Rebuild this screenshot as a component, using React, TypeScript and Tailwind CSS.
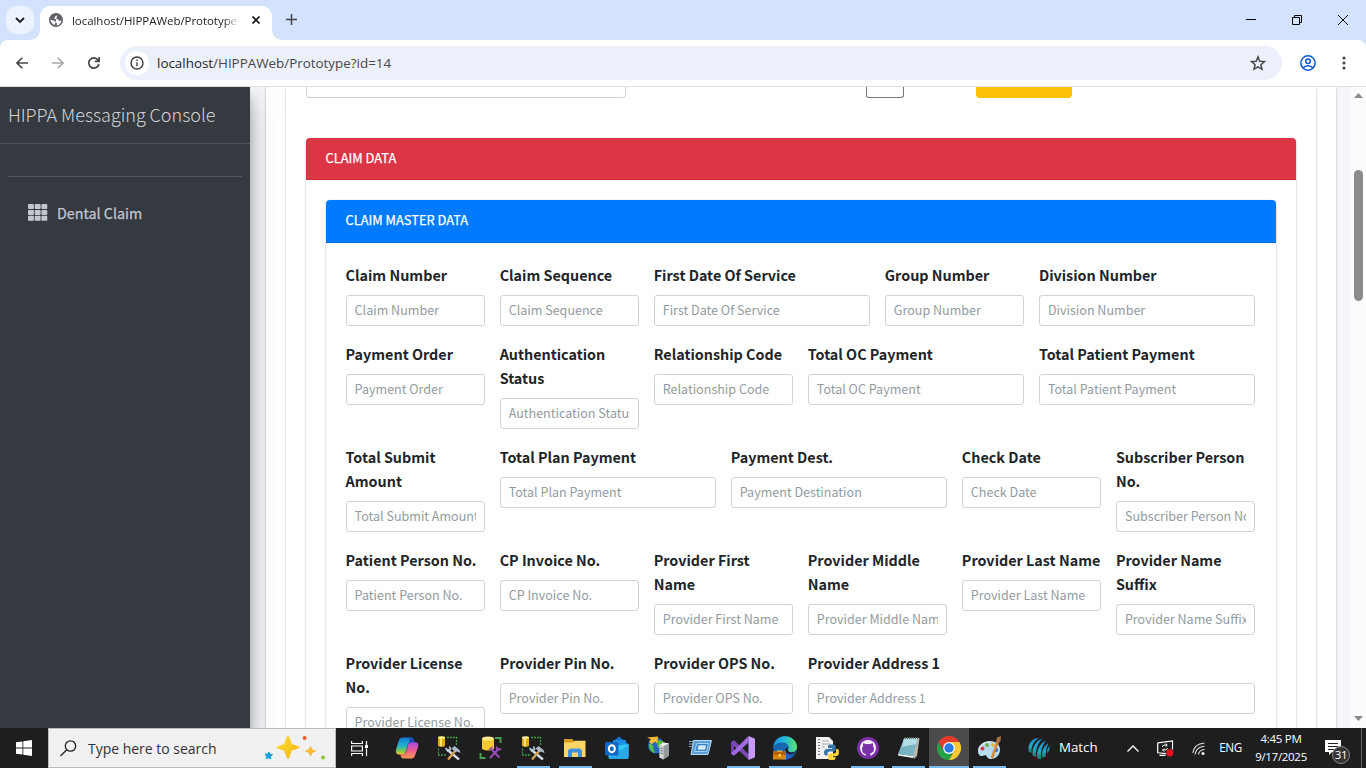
import type { ReactNode } from "react";

type Field = { label: string; placeholder?: string; span: string };

const S2 = "col-span-2";
const S3 = "col-span-3";

const rows: Field[][] = [
  [
    { label: "Claim Number", span: S2 },
    { label: "Claim Sequence", span: S2 },
    { label: "First Date Of Service", span: S3 },
    { label: "Group Number", span: S2 },
    { label: "Division Number", span: S3 },
  ],
  [
    { label: "Payment Order", span: S2 },
    { label: "Authentication Status", span: S2 },
    { label: "Relationship Code", span: S2 },
    { label: "Total OC Payment", span: S3 },
    { label: "Total Patient Payment", span: S3 },
  ],
  [
    { label: "Total Submit Amount", span: S2 },
    { label: "Total Plan Payment", span: S3 },
    { label: "Payment Dest.", placeholder: "Payment Destination", span: S3 },
    { label: "Check Date", span: S2 },
    { label: "Subscriber Person No.", span: S2 },
  ],
  [
    { label: "Patient Person No.", span: S2 },
    { label: "CP Invoice No.", span: S2 },
    { label: "Provider First Name", span: S2 },
    { label: "Provider Middle Name", span: S2 },
    { label: "Provider Last Name", span: S2 },
    { label: "Provider Name Suffix", span: S2 },
  ],
  [
    { label: "Provider License No.", span: S2 },
    { label: "Provider Pin No.", span: S2 },
    { label: "Provider OPS No.", span: S2 },
    { label: "Provider Address 1", span: "col-span-6" },
  ],
];

const cardShadow = "shadow-[0_0_1px_rgba(0,0,0,0.125),0_1px_3px_rgba(0,0,0,0.2)]";

function FormField({ label, placeholder, span }: Field) {
  return (
    <div className={`${span} min-w-0 pb-4`}>
      <label className="mb-2 block text-[14.35px] leading-6 font-bold text-[#212529]">{label}</label>
      <input
        type="text"
        placeholder={placeholder ?? label}
        className="block h-[31px] w-full rounded-[3px] border border-[#ced4da] bg-white px-2 pb-[2px] text-[12.55px] text-[#495057] placeholder:text-[#939ba2] outline-none"
      />
    </div>
  );
}

function TitleBar() {
  return (
    <div className="flex h-10 shrink-0 items-start bg-[#d3e2fd]">
      <div className="mt-[6px] ml-[6px] flex size-7 items-center justify-center rounded-[10px] bg-[#ecf2fe]">
        <svg width="10" height="8" viewBox="0 0 10 8" fill="none" stroke="#1f1f1f" strokeWidth="1.900"><path d="M1 2l4 4 4-4" /></svg>
      </div>
      <div className="relative mt-[6px] ml-[6px] flex h-[34px] w-[232px] items-center rounded-t-[10px] bg-white pb-[6px]">
        <svg className="absolute bottom-0 -left-[10px]" width="10" height="10"><path d="M10 0v10H0A10 10 0 0 0 10 0z" fill="#fff" /></svg>
        <svg className="absolute -right-[10px] bottom-0" width="10" height="10"><path d="M0 0v10h10A10 10 0 0 1 0 0z" fill="#fff" /></svg>
        <svg className="ml-[9px] shrink-0" width="14" height="14" viewBox="0 0 14 14">
          <circle cx="7" cy="7" r="7" fill="#5f6368" />
          <path d="M8.400 1.700c-.2 1.300-1.700.9-2.200 1.700-.3.700.2 1-.6 1.400-.7.400-.6 1.200.2 1.300h2.400c1.300.1 1 1.300 1.800 1.600.7.200 1.600-.4 2.500-.3-.3 2.700-2.300 4.700-4.700 5 .1-1.100.6-1.900-.2-2.400-.9-.5-1.900-.4-1.900-1.700C5.700 7.400 3.200 7.900 1.600 6.300c-.1 2.600 1.700 5 4.100 5.700" fill="#fff" />
        </svg>
        <div className="ml-[9px] w-[167px] overflow-hidden pt-px font-['Open_Sans',sans-serif] text-[11.500px] tracking-[-0.050px] whitespace-nowrap text-[#1f1f1f] [mask-image:linear-gradient(to_right,#000_152px,transparent)]">
          localhost/HIPPAWeb/Prototype?
        </div>
        <svg className="ml-[13px] shrink-0" width="8" height="8" viewBox="0 0 9 9" stroke="#1f1f1f" strokeWidth="1.800"><path d="M.5.5l8 8M8.500.5l-8 8" /></svg>
      </div>
      <svg className="mt-[14px] ml-[14px]" width="11" height="11" viewBox="0 0 11 11" stroke="#444" strokeWidth="1.500"><path d="M5.500 0v11M0 5.500h11" /></svg>
      <div className="ml-auto flex items-start">
        <svg className="mt-[19px]" width="10" height="1"><path d="M0 .5h10" stroke="#000" /></svg>
        <svg className="mt-[15px] ml-9" width="10" height="10" viewBox="0 0 10 10" fill="none" stroke="#000"><path d="M.5 2.500h7v7h-7zM2.500 2.500v-2h7v7h-2" /></svg>
        <svg className="mt-[15px] mr-[18px] ml-9" width="10" height="10" viewBox="0 0 10 10" stroke="#000"><path d="M0 0l10 10M10 0L0 10" /></svg>
      </div>
    </div>
  );
}

function Toolbar() {
  return (
    <div className="bg-[#d3e2fd]">
      <div className="flex h-[47px] items-center rounded-t-[8px] border-b border-[#dfe1df] bg-white">
        <svg className="ml-4" width="12" height="12" viewBox="0 0 12 12" fill="none" stroke="#474747" strokeWidth="1.600"><path d="M12 6H1M6.300.7L1 6l5.300 5.300" /></svg>
        <svg className="ml-6" width="12" height="12" viewBox="0 0 12 12" fill="none" stroke="#a9a9a9" strokeWidth="1.600"><path d="M0 6h11M5.700.7L11 6l-5.300 5.300" /></svg>
        <svg className="ml-6" width="12" height="12" viewBox="0 0 12 12" fill="none" stroke="#474747" strokeWidth="1.700"><path d="M10.900 7A5.100 5.100 0 1 1 10 3l1 1.200M11.100 0v4.300H6.800" /></svg>
        <div className="ml-5 flex h-[34px] w-[1162px] items-center rounded-full bg-[#ecf0fa]">
          <div className="ml-[5px] flex size-6 items-center justify-center rounded-full bg-white">
            <svg width="14" height="14" viewBox="0 0 14 14" fill="none" stroke="#3c3c3c" strokeWidth="1.400"><circle cx="7" cy="7" r="6" /><path d="M7 6.200v4M7 3.600v1.500" /></svg>
          </div>
          <span className="ml-2 pt-px font-['Open_Sans',sans-serif] text-[13.400px] text-[#474747]">
            <span className="text-[#1f1f1f]">localhost</span>/HIPPAWeb/Prototype?id=14
          </span>
          <svg className="mr-[16px] ml-auto" width="16" height="16" viewBox="0 0 24 24" fill="none" stroke="#474747" strokeWidth="2.200"><path d="M12 2.800l2.700 6.500 7 .6-5.300 4.600 1.600 6.900-6-3.700-6 3.700 1.600-6.900L2.300 9.900l7-.6z" /></svg>
        </div>
        <svg className="ml-[18px]" width="16" height="16" viewBox="0 0 16 16" fill="none" stroke="#0b57d0" strokeWidth="1.500"><circle cx="8" cy="8" r="7.200" /><circle cx="8" cy="6.300" r="2.300" /><path d="M3 13c2.500-3 7.500-3 10 0" /></svg>
        <svg className="ml-[26px]" width="4" height="14" fill="#474747"><circle cx="2" cy="2" r="1.600" /><circle cx="2" cy="7" r="1.600" /><circle cx="2" cy="12" r="1.600" /></svg>
      </div>
    </div>
  );
}

function Sidebar() {
  return (
    <aside className="relative z-10 w-[250px] shrink-0 bg-[#343a40] shadow-[0_14px_28px_rgba(0,0,0,0.25),0_10px_10px_rgba(0,0,0,0.22)]">
      <div className="h-[57px] border-b border-[#4b545c] pt-[12px] pl-2 text-[18px] leading-[30px] font-light tracking-[-0.030px] text-[#d2d4d6]">
        HIPPA Messaging Console
      </div>
      <div className="mx-2 h-[33px] border-b border-[#4f5962]" />
      <div className="mx-2 mt-4 flex h-10 items-center pl-5 text-[#c2c7d0]">
        <svg className="-mt-px" width="20" height="17" viewBox="0 0 20 17" fill="#c2c7d0">
          {[0, 6.7, 13.4].map((x) =>
            [0, 5.9, 11.8].map((y) => <rect key={`${x}-${y}`} x={x} y={y} width="5.900" height="5" rx="0.900" />),
          )}
        </svg>
        <span className="ml-[9px] text-[14.300px] font-normal [-webkit-text-stroke:0.250px_#c2c7d0]">Dental Claim</span>
      </div>
    </aside>
  );
}

function Content() {
  return (
    <main className="h-[641px] min-w-0 flex-1 overflow-hidden bg-[#f4f6f9] px-4 pr-[15px]">
      <div className={`bg-white px-5 ${cardShadow}`}>
        <div className={`bg-white px-5 ${cardShadow}`}>
          <div className="flex h-[51px] items-start">
            <div className="h-[11px] w-80 rounded-b-[4px] border border-t-0 border-[#ced4da]" />
            <div className="ml-[239.500px] h-[11px] w-[38px] rounded-b-[3px] border border-t-0 border-[#767676]" />
            <div className="ml-[72.500px] h-[11px] w-24 rounded-b-[4px] bg-[#ffc107]" />
          </div>
          <section className={`rounded-[4px] bg-white ${cardShadow}`}>
            <h2 className="flex h-[42px] items-center rounded-t-[4px] border-b border-[#c72f3e] bg-[#dc3545] pb-[2px] pl-[19.500px] text-[12.850px] text-white [-webkit-text-stroke:0.250px_#fff]">CLAIM DATA</h2>
            <div className="p-5">
              <div className={`rounded-[4px] bg-white ${cardShadow}`}>
                <h3 className="flex h-[43px] items-center rounded-t-[4px] border-b border-[#006fe6] bg-[#007bff] pb-[3px] pl-[19.500px] text-[12.850px] text-white [-webkit-text-stroke:0.250px_#fff]">CLAIM MASTER DATA</h3>
                <form className="py-5 pr-[21px] pl-[19.600px]">
                  {rows.map((row, i) => (
                    <div key={i} className="grid grid-cols-12 gap-x-[15px]">
                      {row.map((f) => <FormField key={f.label} {...f} />)}
                    </div>
                  ))}
                </form>
              </div>
            </div>
          </section>
        </div>
      </div>
    </main>
  );
}

function ScrollBar() {
  return (
    <div className="flex w-[15px] shrink-0 flex-col items-center bg-[#fcfcfc]">
      <svg className="mt-[6px]" width="9" height="5"><path d="M0 5L4.500 0 9 5z" fill="#8b8b8b" /></svg>
      <div className="mt-[72px] h-[131px] w-[9px] rounded-full bg-[#8b8b8b]" />
      <svg className="mt-auto mb-[7px]" width="9" height="5"><path d="M0 0l4.500 5L9 0z" fill="#8b8b8b" /></svg>
    </div>
  );
}

function Tools() {
  return (
    <g>
      <path d="M10 13.500l12 10" stroke="#d2dbe6" strokeWidth="2.400" />
      <path d="M8.500 12l2.500 3 2.500-1.500-1-3" fill="none" stroke="#bccada" strokeWidth="1.600" />
      <path d="M19 14l-8 9.500" stroke="#d9a352" strokeWidth="2.300" />
      <path d="M14.500 12.500l3-2.500 5 4 1 3-3.500-1.500-1.500.5z" fill="#aebccb" />
    </g>
  );
}

function DbTools() {
  return (
    <>
      <path d="M10 1.500h9.500V10M1.500 12.500v6.500h8" fill="none" stroke="#3f9a45" strokeWidth="1.300" strokeDasharray="2 1" />
      <path d="M1 1.500h7v8.500q-3.500 1.800-7 0z" fill="#e5a71c" />
      <path d="M3 2h2v8H3z" fill="#ffe27a" />
      <ellipse cx="4.500" cy="1.500" rx="3.500" ry="1.200" fill="#fff0a8" />
      <Tools />
    </>
  );
}

const apps: { name: string; width: string; running?: boolean; active?: boolean; art: ReactNode }[] = [
  {
    name: "copilot", width: "w-[42px]",
    art: (
      <>
        <defs>
          <linearGradient id="cpA" x1="0" y1="0" x2="0" y2="1"><stop offset="0" stopColor="#1478d8" /><stop offset=".5" stopColor="#1fb5c9" /><stop offset=".8" stopColor="#7fc94b" /><stop offset="1" stopColor="#f7c531" /></linearGradient>
          <linearGradient id="cpB" x1="0" y1="0" x2="0" y2="1"><stop offset="0" stopColor="#a44ce8" /><stop offset=".5" stopColor="#ee5a94" /><stop offset="1" stopColor="#fb9a4b" /></linearGradient>
        </defs>
        <path d="M8 1.500h8c1.600 0 2.300 1 2.800 2.500l.8 2.500h-4.100c-1.500 0-2.300.8-2.700 2.200L10.500 16c-.5 1.700-1.400 2.500-3 2.500H4.200C1 18.500.4 16 1.200 13L3.800 4.800C4.500 2.500 5.800 1.500 8 1.500z" fill="url(#cpA)" />
        <path d="M16.500 22.500H9c-2 0-2.700-.8-3.300-2.500l-.6-1.700h3c1.600 0 2.400-.9 2.900-2.500l2.300-7.500c.5-1.400 1.300-2.100 2.700-2.100h4.200c3 0 3.500 2.500 2.700 5.300L20.200 19c-.8 2.600-1.900 3.500-3.700 3.500z" fill="url(#cpB)" />
        <path d="M15 1.500h1.500c1.200 0 1.900 1 2.300 2.500l.8 2.500h-4.100c-.8 0-1.300.2-1.700.6z" fill="#2447b8" />
      </>
    ),
  },
  { name: "profiler", width: "w-[42px]", art: <DbTools /> },
  {
    name: "db-config", width: "w-[42px]",
    art: (
      <>
        <path d="M16 2h5.500v5M1.500 17v5h5" fill="none" stroke="#4aa04e" strokeWidth="2" />
        <path d="M3 2.500h12V13q-6 3-12 0z" fill="#f6c934" />
        <ellipse cx="9" cy="2.500" rx="6" ry="2" fill="#ffeb8a" />
        <path d="M12 13l8.500 8.500M19.500 13L11 22" stroke="#9a50b8" strokeWidth="1.900" />
        <path d="M10 14l3.500-3M17.500 10.500c0 2.500 2 3.500 4.500 2.500" stroke="#9a50b8" strokeWidth="1.900" fill="none" />
      </>
    ),
  },
  { name: "sql-tools", width: "w-[42px]", running: true, art: <DbTools /> },
  {
    name: "explorer", width: "w-[42px]", running: true,
    art: (
      <>
        <path d="M1 3h8.500l1.500 2.500H22V9H1z" fill="#d99a1c" />
        <path d="M1 6.500h9l1.500-1.700H22.500V21H1z" fill="#ffd567" />
        <path d="M5 21v-6.500L7 12.500h10l2 2V21h-4v-4.500H9V21z" fill="#3e93d8" />
      </>
    ),
  },
  {
    name: "outlook", width: "w-[42px]",
    art: (
      <>
        <path d="M5 8L14 .5 23.500 8v5H5z" fill="#1672c8" />
        <path d="M8 4h13v10H8z" fill="#1d8fe2" />
        <path d="M3.500 11l20-3v13q0 2-2 2h-16q-2 0-2-2z" fill="#35c8f5" />
        <path d="M3.500 22L23.500 9v12q0 2-2 2H5z" fill="#2aa8ea" />
        <rect x="0" y="6" width="13.500" height="13.500" rx="1.500" fill="#1068c4" />
        <ellipse cx="6.800" cy="12.700" rx="3" ry="3.500" fill="none" stroke="#fff" strokeWidth="2" />
      </>
    ),
  },
  {
    name: "iis", width: "w-[42px]",
    art: (
      <>
        <circle cx="9" cy="9.500" r="8" fill="#2467c4" />
        <path d="M2 8c3 0 5 2 4.500 4s2 3 1 5.200C4 16 1.500 12 2 8zM10 4l6 1 1.500 5-3 3-4-2z" fill="#58c03f" />
        <path d="M0 1.500l11-1-1 7-2-2-3.500 3L2 5.500 4 3.500z" fill="#f8bd30" />
        <path d="M12.500 9l4-2.500 5.500 1v12.500l-5.500 3.500-4-2z" fill="#969c9e" />
        <path d="M12.500 9l4 1v13.500l-4-2z" fill="#d5d9da" />
        <path d="M12.500 9l4-2.500 5.500 1-5.500 2.500z" fill="#eef0f0" />
        <path d="M13 12l3 .5M13 14.500l3 .5M13 17l3 .5" stroke="#777f85" />
      </>
    ),
  },
  {
    name: "run", width: "w-[42px]",
    art: (
      <>
        <path d="M4.500 4.500h18l-3.500 14H2z" fill="#5b9fd6" stroke="#b8dcf5" />
        <path d="M8 7.500h11.500l-2 8H5.500z" fill="#3a83c4" stroke="#a5d2f3" />
        <path d="M10 9.800h6.500l-.8 3.400H9z" fill="#cce4f6" stroke="#fff" strokeWidth=".7" />
        <path d="M-1 5.500h5M0 8h3.500M-.5 10.500h3" stroke="#8ebde2" strokeWidth=".9" />
      </>
    ),
  },
  {
    name: "visual-studio", width: "w-[42px]", running: true,
    art: (
      <>
        <path d="M0 6l3-1.800v15.600L0 18z" fill="#7042a8" />
        <path d="M3 4.200L18 18.500V24L0 7z" fill="#7a4bb8" />
        <path d="M0 17.500L17.500 0v6.500L3 19.800z" fill="#a06be0" />
        <path d="M17.500 0L24 2.800v18.400L17.500 24z" fill="#c69aff" />
      </>
    ),
  },
  {
    name: "edge", width: "w-[42px]", running: true,
    art: (
      <>
        <defs><linearGradient id="edg"><stop offset="0" stopColor="#1a91d8" /><stop offset=".5" stopColor="#25b9d8" /><stop offset="1" stopColor="#5ee36b" /></linearGradient></defs>
        <circle cx="12" cy="12" r="11.800" fill="#1565b0" />
        <path d="M.2 12C1 3 7-.2 12 .2 20 .5 24 6 24 11c0 4-3.500 5.500-7 5-3-.4-2.500-2-1.500-3.500 1-3-2-6-6-6C5 6.500 1.500 8.500.2 12z" fill="url(#edg)" />
        <path d="M12.500 14c0-1.500 1-2.500 2.800-2.500-.9 1.800-.8 4.500 2.700 5 2 .3 4-.2 5.300-1.200-1 2-3 3-5.500 3-3 0-5.300-1.800-5.300-4.300z" fill="#1c1c1c" />
        <path d="M0 15.500h13v8H0z" fill="#d78310" /><path d="M0 15.500h13v3.500H0z" fill="#b75e08" />
        <path d="M5.500 18h2.500v2.500H5.500zM4 15.500v-1h5v1" fill="#ffd455" />
      </>
    ),
  },
  {
    name: "python", width: "w-[41px]",
    art: (
      <>
        <path d="M1 1h13l4 4v18H1z" fill="#f2f2f2" />
        <path d="M4 3v18" stroke="#777" strokeDasharray="1 2" strokeWidth="2" />
        <path d="M7 5h7M7 8h8M7 11h3" stroke="#a7a7a7" />
        <path d="M14.500 8.500h4q2 0 2 2v3q0 2-2 2h-4q-2 0-2 2v2h-1.500q-2 0-2-3t2.500-3.500h5.500v-.7h-4v-2q0-1.800 2-1.800z" fill="#3776ab" />
        <path d="M18.500 24h-3.500q-2 0-2-2v-2.500q0-2 2-2h4q2 0 2-2V13h1q2 0 2 3.200T22 20h-5v.7h3.500V22q0 2-2 2z" fill="#ffd43b" />
      </>
    ),
  },
  {
    name: "github", width: "w-[41px]", running: true,
    art: (
      <>
        <circle cx="12" cy="12" r="11" fill="#7b2fa8" />
        <circle cx="12" cy="12" r="8" fill="#f7effa" />
        <path d="M9.700 21v-3.600c-2.500-.5-3.700-2-3.700-4.600 0-1.200.4-2.100 1.100-2.900-.3-.9-.2-1.900.1-2.700 1 0 1.900.5 2.600 1.100 1.400-.3 3-.3 4.400 0 .7-.6 1.600-1.100 2.600-1.100.3.800.4 1.800.1 2.700.7.800 1.100 1.700 1.100 2.900 0 2.600-1.200 4.100-3.700 4.600V21z" fill="#7b2fa8" />
        <path d="M6.500 15.500q1 2.200 3.200 2" stroke="#7b2fa8" fill="none" />
      </>
    ),
  },
  {
    name: "notepad", width: "w-[41px]", running: true,
    art: (
      <>
        <path d="M7.500 3L22.500 2l-2.500 18-3 3z" fill="#b9b6ab" />
        <path d="M7 2.500l13.500-.5L16 20 1 18z" fill="#76b4c4" />
        <path d="M7 2.500l13.500-.5L19 8 5 11z" fill="#b4dce4" />
        <path d="M1 18l15 2v2L1 19.500z" fill="#f1f5f5" />
        <path d="M8 2.200h13" stroke="#6e7779" strokeDasharray="1 1" strokeWidth="2" />
      </>
    ),
  },
  {
    name: "chrome", width: "w-[40px]", running: true, active: true,
    art: (
      <>
        <path d="M1.600 6A12 12 0 0 0 12 24l5.200-9H6.800z" fill="#26a148" />
        <path d="M1.600 6A12 12 0 0 1 22.400 6H12L6.800 15z" fill="#e33b2e" />
        <path d="M12 6h10.400A12 12 0 0 1 12 24l5.200-9z" fill="#fcc934" />
        <circle cx="12" cy="12" r="5.900" fill="#fff" /><circle cx="12" cy="12" r="4.700" fill="#287ae6" />
      </>
    ),
  },
  {
    name: "paint", width: "w-[41px]", running: true,
    art: (
      <>
        <path d="M12 5C5 5 0 9.500 0 15c0 3 1.500 5 3.500 5 2 0 2.500-1.500 4.500-.5 1.500 1 1 3.500 5 3.500 5 0 9-4 9-9.500C22 8.500 18 5 12 5z" fill="#b8dcee" />
        <path d="M12 6C6 6 1 10 1 14" stroke="#e5f6fd" fill="none" />
        <circle cx="4.500" cy="12.500" r="2" fill="#d63b35" /><circle cx="9" cy="9" r="2" fill="#69b346" /><circle cx="15" cy="9" r="1.700" fill="#f0ad3d" /><circle cx="18" cy="14" r="2" fill="#2f62bf" />
        <path d="M19.500 6L14 22" stroke="#d9873a" strokeWidth="2.600" />
        <path d="M18 6l1-4.500L23 0l-.5 5L20 8z" fill="#ab7340" />
      </>
    ),
  },
];

function Taskbar() {
  return (
    <footer className="flex h-10 shrink-0 bg-[#1e1e1e] font-['Open_Sans',sans-serif] text-white">
      <div className="flex w-12 items-center justify-center">
        <svg width="16" height="16" viewBox="0 0 16 16" fill="#fff"><path d="M0 2.300L6.500 1.400v6.200H0zM7.300 1.200L16 0v7.600H7.300zM0 8.400h6.500v6.200L0 13.700zM7.300 8.400H16V16l-8.700-1.200z" /></svg>
      </div>
      <div className="flex w-72 items-center border border-[#bcbcbc] bg-[#f1f1f1]">
        <svg className="ml-[11px]" width="17" height="17" viewBox="0 0 17 17" fill="none" stroke="#222" strokeWidth="1.300"><circle cx="10.500" cy="6" r="5.200" /><path d="M6.800 9.700L.5 16" /></svg>
        <span className="ml-[11px] text-[14px] tracking-[-0.020px] text-[#333]">Type here to search</span>
        <svg className="mr-[9px] ml-auto" width="62" height="26" viewBox="0 0 62 26">
          <defs><linearGradient id="spk" x1="0" y1="0" x2="1" y2="1"><stop offset="0" stopColor="#ffdc3c" /><stop offset="1" stopColor="#f5b50e" /></linearGradient></defs>
          <path d="M22.500 2q1.500-2 3 0l2.300 7 6.500 2.300q2 1 0 2.200l-6.500 2.300-2.500 7q-1.300 1.700-2.600 0L20.200 15.800l-6.500-2.300q-2-1.200 0-2.200l6.500-2.300z" fill="url(#spk)" />
          <path d="M46.500 11.500l1.500 3.200 3.500 1.300-3.500 1.600-1.500 3.400-1.500-3.400-3.500-1.600 3.500-1.300z" fill="#fbb932" stroke="#fbb932" strokeLinejoin="round" />
          <path d="M4.800 17l1.200 2.200 2.500.4-2 1.700.2 2.500-2.200-1.100-2.400 1.100.6-2.500L1 19l2.600.2z" fill="#169fe0" stroke="#169fe0" strokeLinejoin="round" />
          <circle cx="40.600" cy="3" r="2" fill="#ef5a29" /><circle cx="59" cy="22.500" r="2" fill="#8cc63f" />
        </svg>
      </div>
      <div className="flex w-[50px] items-center pl-[15px]">
        <svg width="17" height="17" viewBox="0 0 17 17" fill="none" stroke="#fff" strokeWidth="1.200"><path d="M.6 1v2.500h10.800V1M.6 16v-2.500h10.800V16M.6 6h10.800v5H.6zM15.500 1v4M15.500 8.500V16" /><path d="M14 5h3v3h-3z" fill="#fff" stroke="none" /></svg>
      </div>
      {apps.map((a) => (
        <div key={a.name} className={`${a.width} flex shrink-0 flex-col items-center ${a.active ? "bg-[#4b4b4b]" : ""}`}>
          <svg className="mt-2" width="24" height="24" viewBox="0 0 24 24">{a.art}</svg>
          {a.running && <div className={`mt-auto h-0.5 bg-[#76b9ed] ${a.active ? "w-full" : "w-[33px]"}`} />}
        </div>
      ))}
      <div className="flex flex-1 items-center">
        <svg className="ml-[18px] shrink-0" width="22" height="23" viewBox="0 0 22 23">
          <defs><linearGradient id="icc" x1="0" y1="0" x2="0" y2="1"><stop offset="0" stopColor="#1d8ed0" /><stop offset=".6" stopColor="#25a6bd" /><stop offset="1" stopColor="#197a68" /></linearGradient></defs>
          <g fill="url(#icc)">
            <path d="M1 15C-1 7 4 1 11 1 6 4 3 9 3.500 16z" />
            <path d="M4.500 18C4 10 8 3.500 14.500 1.500 10 6 7.500 12 8 20q-2 0-3.500-2z" />
            <path d="M9 21C8.500 13 12 6 18 3.500 14.500 8 12.500 14 13 22q-2.500.5-4-1z" />
            <path d="M14 20.500C13.500 14 16 8.500 20.500 6c-2 4-3 8.500-2.700 13q-1.800 1.800-3.800 1.500z" />
            <path d="M19 16.500q-.3-4.500 2.200-7.500 1.200 4-2.200 7.500z" />
          </g>
        </svg>
        <span className="ml-[9px] text-[13.300px]">Match</span>
        <svg className="ml-[29.500px] shrink-0" width="12" height="7" viewBox="0 0 12 7" fill="none" stroke="#fff" strokeWidth="1.300"><path d="M.5 6.500L6 1l5.500 5.500" /></svg>
        <svg className="ml-[18px] shrink-0" width="17" height="17" viewBox="0 0 17 17" fill="none" stroke="#fff" strokeWidth="1.200">
          <path d="M.7 2.800L15.500 1v8.500M.7 2.800v10l8.300.8M2.500 15.300h6" />
          <path d="M5.200 7Q5.500 5 8 5h2M8.800 3.500L10.200 5 8.800 6.600M10.500 8Q10 10 8 10H6M7 8.500L5.500 10 7 11.500" strokeWidth="1" />
          <circle cx="12.800" cy="12.800" r="3.600" fill="#e81123" stroke="none" />
        </svg>
        <svg className="ml-[18px] shrink-0" width="13" height="13" viewBox="0 0 13 13" fill="none" stroke="#ddd" strokeWidth="1.100"><path d="M.8 11Q2 2 12.500 1M3 12.500Q4 5 12.500 4.200M6.500 12.500Q7 8 12.500 7.500" /><circle cx="11" cy="11.500" r="1.500" fill="#fff" stroke="none" /></svg>
        <span className="ml-[14px] text-[11.700px] tracking-[-0.300px]">ENG</span>
        <div className="ml-[11px] w-[56px] text-center text-[11.500px] leading-[18px] tracking-[-0.300px] whitespace-nowrap">
          <div>4:45 PM</div>
          <div>9/17/2025</div>
        </div>
        <div className="relative ml-[16px] h-[26px] w-[26px] shrink-0">
          <svg className="mt-[3px]" width="17" height="18" viewBox="0 0 17 18"><path d="M0 2h16v12H7l-3 3v-3H0z" fill="#fff" /><path d="M3 5.500h10M3 8.500h10M3 11.500h6" stroke="#222" /></svg>
          <span className="absolute top-[11px] left-[7px] flex size-[18px] items-center justify-center rounded-full border border-[#8a8a8a] bg-[#333] text-[11.500px] tracking-[-0.300px]">31</span>
        </div>
        <div className="mr-1 ml-auto h-10 w-px bg-[#666]" />
      </div>
    </footer>
  );
}

export default function App() {
  return (
    <div className="flex h-[768px] w-[1366px] flex-col overflow-hidden bg-white font-['Noto_Sans_CJK_SC','Noto_Sans',sans-serif]">
      <TitleBar />
      <Toolbar />
      <div className="flex h-[641px] shrink-0 overflow-hidden">
        <Sidebar />
        <Content />
        <ScrollBar />
      </div>
      <Taskbar />
    </div>
  );
}
